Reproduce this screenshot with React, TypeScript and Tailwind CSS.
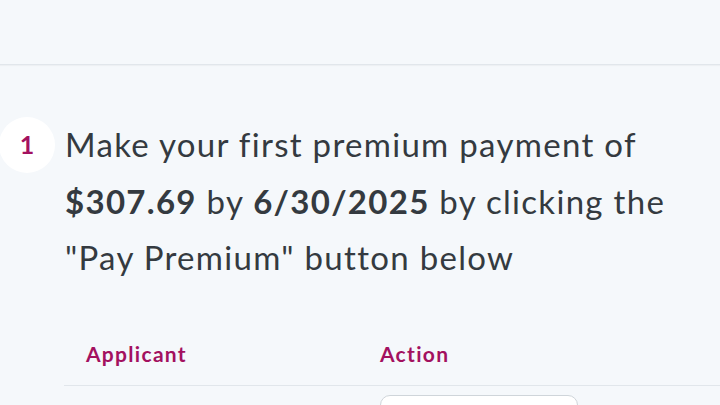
export default function App() {
  return (
    <div
      className="w-[720px] h-[405px] overflow-hidden bg-[#f5f8fb] text-[#343a40]"
      style={{ fontFamily: 'Lato, "Noto Sans", sans-serif' }}
    >
      {/* header */}
      <div className="h-[65px] border-b border-[#e1e6eb] shadow-[0_1px_1px_rgba(0,0,0,0.03)]" />

      {/* step */}
      <div className="flex items-start pt-[52px]">
        <div className="w-[56px] h-[56px] -ml-[1px] shrink-0 rounded-full bg-white flex items-center justify-center">
          <span className="text-[25px] font-bold text-[#a3115f]">1</span>
        </div>
        <p className="ml-[10px] text-[33px] leading-[56.5px] -mt-[1px] tracking-[1.3px] whitespace-nowrap">
          Make your first premium payment of
          <br />
          <span className="font-bold">$307.69</span> by{' '}
          <span className="font-bold">6/30/2025</span> by clicking the
          <br />
          "Pay Premium" button below
        </p>
      </div>

      {/* table */}
      <div className="ml-[64px] mt-[40px]">
        <div className="flex pt-[14px] pb-[17px] leading-[28px] border-b border-[#e1e6eb] text-[21px] font-bold tracking-[1.3px] text-[#a3115f]">
          <div className="w-[316px] pl-[22px]">Applicant</div>
          <div>Action</div>
        </div>
        <div className="flex pt-[9px]">
          <div className="w-[316px]" />
          <div className="w-[198px] h-[44px] rounded-[10px] border border-[#cfd5da] bg-white" />
        </div>
      </div>
    </div>
  );
}
